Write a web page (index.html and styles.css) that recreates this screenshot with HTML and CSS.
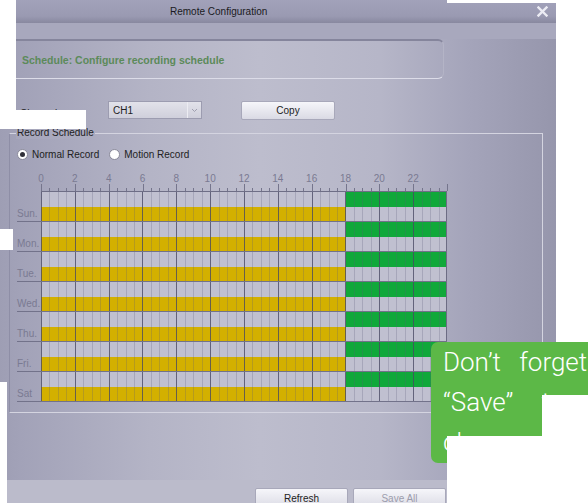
FILE: index.html
```html
<!DOCTYPE html>
<html lang="en">
<head>
  <meta charset="UTF-8">
  <meta name="viewport" content="width=device-width, initial-scale=1.0">
  <title>Remote Configuration</title>
  <link rel="stylesheet" href="styles.css">
</head>
<body>
  <div class="dialog">
    <div class="titlebar">
      <span class="title">Remote Configuration</span>
      <svg class="close" width="11" height="11" viewBox="0 0 11 11">
        <path d="M1.5 1.5 L9.5 9.5 M9.5 1.5 L1.5 9.5" stroke="#ececf4" stroke-width="2.4" stroke-linecap="square"/>
      </svg>
    </div>
    <div class="strip"></div>
    <div class="page-head">Schedule: Configure recording schedule</div>

    <div class="channel-row">
      <label class="field-label">Channel</label>
      <div class="select">
        <span>CH1</span>
        <span class="select-arrow">
          <svg width="7" height="5" viewBox="0 0 7 5"><path d="M1 1 L3.5 3.5 L6 1" fill="none" stroke="#a0a0b0" stroke-width="1"/></svg>
        </span>
      </div>
      <button class="btn copy">Copy</button>
    </div>

    <div class="group">
      <div class="legend">Record Schedule</div>
      <div class="radios">
        <label class="radio"><span class="dot checked"></span>Normal Record</label>
        <label class="radio"><span class="dot"></span>Motion Record</label>
      </div>
      <div class="ruler" id="ruler"></div>
      <div class="schedule" id="schedule"></div>
    </div>

    <div class="footer">
      <button class="btn">Refresh</button>
      <button class="btn disabled">Save All</button>
    </div>
  </div>

  <div class="tip">
    <p class="l1">Don’t forget</p>
    <p class="l2">“Save” to</p>
    <p>changes</p>
  </div>

  <!-- blank patches laid over the capture -->
  <div class="patch" style="left:0;top:0;width:16px;height:110px"></div>
  <div class="patch" style="left:0;top:110px;width:86px;height:19px"></div>
  <div class="patch" style="left:0;top:229px;width:13px;height:21px"></div>
  <div class="patch" style="left:0;top:382px;width:7px;height:121px"></div>
  <div class="patch" style="left:447px;top:0;width:141px;height:3px"></div>
  <div class="patch" style="left:542px;top:395px;width:46px;height:108px"></div>
  <div class="patch" style="left:447px;top:436px;width:141px;height:67px"></div>

  <script>
    const days = [
      { name: "Sun.", normal: [0, 18], motion: [18, 24] },
      { name: "Mon.", normal: [0, 18], motion: [18, 24] },
      { name: "Tue.", normal: [0, 18], motion: [18, 24] },
      { name: "Wed.", normal: [0, 18], motion: [18, 24] },
      { name: "Thu.", normal: [0, 18], motion: [18, 24] },
      { name: "Fri.", normal: [0, 18], motion: [18, 24] },
      { name: "Sat", normal: [0, 18], motion: [18, 24] },
    ];

    function pct(h) {
      return (h / 24 * 100).toFixed(4) + "%";
    }

    function bar(range, cls) {
      const left = pct(range[0]);
      const width = pct(range[1] - range[0]);
      return `<div class="bar ${cls}" style="left:${left};width:${width}"></div>`;
    }

    const ruler = document.getElementById("ruler");
    let html = "";
    for (let h = 0; h < 24; h += 2) {
      html += `<span class="hour" style="left:${pct(h)}">${h}</span>`;
    }
    for (let i = 0; i <= 48; i++) {
      const cls = i % 4 === 0 ? "tick major" : "tick";
      html += `<span class="${cls}" style="left:${pct(i / 2)}"></span>`;
    }
    ruler.innerHTML = html;

    const schedule = document.getElementById("schedule");
    days.forEach(day => {
      schedule.innerHTML += `<div class="day">
        <span class="day-name">${day.name}</span>
        <div class="tracks">
          <div class="track">${bar(day.motion, "motion")}</div>
          <div class="track">${bar(day.normal, "normal")}</div>
        </div>
      </div>`;
    });
  </script>
</body>
</html>
```

FILE: styles.css
```css
html {
  overflow: hidden;
}
body {
  margin: 0;
  width: 588px;
  height: 503px;
  overflow: hidden;
  position: relative;
  background-color: white;
  font-family: "Liberation Sans", Arial, sans-serif;
  font-size: 10px;
  color: #222;
}
.dialog {
  width: 556px;
  height: 503px;
  overflow: hidden;
  background: linear-gradient(to right, #9e9eb4 0, #a2a2b8 20px, #b4b4c6 150px, #bdbdcd 260px, #b6b6c8 380px, #a4a4ba 470px, #9696ac 556px);
}
.titlebar {
  height: 23px;
  box-sizing: border-box;
  display: flex;
  align-items: center;
  padding: 0 8px 0 170px;
  background: linear-gradient(to bottom, #a2a2ba 0, #9a9ab2 70%, #88889f 100%);
}
.title {
  flex: 1;
  font-size: 10px;
  color: #1a1a22;
}
.strip {
  height: 16px;
  background-color: #a8a8bd;
}
.page-head {
  margin-left: 16px;
  width: 421px;
  height: 37px;
  display: flex;
  align-items: center;
  padding-left: 6px;
  border-top: 2px solid #85859c;
  border-right: 1px solid #b4b4c6;
  border-bottom: 1px solid #dcdce8;
  border-radius: 0 6px 6px 0;
  font-size: 10.5px;
  font-weight: bold;
  color: #5c8a5a;
}
.channel-row {
  margin-top: 22px;
  height: 18px;
  display: flex;
  align-items: center;
}
.field-label {
  width: 88px;
  padding-left: 20px;
  color: #222;
  position: relative;
  top: 3px;
}
.select {
  width: 92px;
  height: 16px;
  display: flex;
  align-items: center;
  border: 1px solid #9c9cb0;
  background: linear-gradient(to bottom, #e2e2ea, #cfcfdb);
}
.select span:first-child {
  flex: 1;
  padding-left: 4px;
}
.select-arrow {
  width: 13px;
  height: 16px;
  display: flex;
  align-items: center;
  justify-content: center;
  border-left: 1px solid #ececf2;
}
.btn {
  width: 94px;
  height: 19px;
  padding: 0;
  border: 1px solid #a8a8ba;
  border-radius: 2px;
  background: linear-gradient(to bottom, #f6f6fa, #dadae4);
  font-family: "Liberation Sans", Arial, sans-serif;
  font-size: 10px;
  color: #222;
}
.copy {
  margin-left: 39px;
}
.btn.disabled {
  color: #9c9cac;
}

/* Record Schedule group: box from y 133 to 412 */
.group {
  margin: 14px 13px 0 9px;
  height: 278px;
  padding: 0 0 0 7px;
  border: 1px solid #d4d4e0;
  border-left-color: #8e8ea6;
}
.legend {
  margin: -7px 0 0 -1px;
  width: max-content;
  height: 12px;
  line-height: 12px;
  padding: 0 1px;
  color: #222;
  background: linear-gradient(to right, #a6a6bb, #acacc0);
}
.radios {
  margin-top: 9px;
  height: 12px;
  display: flex;
  align-items: center;
  gap: 10px;
}
.radio {
  display: flex;
  align-items: center;
  gap: 4px;
}
.dot {
  width: 9px;
  height: 9px;
  border: 1px solid #8a8a9a;
  border-radius: 50%;
  background-color: white;
  display: flex;
  align-items: center;
  justify-content: center;
}
.dot.checked::after {
  content: "";
  width: 5px;
  height: 5px;
  border-radius: 50%;
  background-color: #303038;
}
.ruler {
  position: relative;
  margin: 11px 0 0 24px;
  width: 406px;
  height: 20px;
  border-bottom: 1px solid #6e6e86;
}
.hour {
  position: absolute;
  top: 2px;
  transform: translateX(-50%);
  color: #7a7a92;
  font-size: 10px;
}
.tick {
  position: absolute;
  bottom: 0;
  width: 1px;
  height: 3px;
  background-color: #75758c;
}
.tick.major {
  height: 7px;
}
.day {
  height: 30px;
  box-sizing: border-box;
  display: flex;
  border-bottom: 1px solid #72728a;
  width: 430px;
}
.day-name {
  width: 24px;
  align-self: flex-end;
  line-height: 14px;
  color: #7a7a92;
  font-size: 10px;
}
.tracks {
  width: 406px;
  position: relative;
  background-color: #c0c0d0;
}
.tracks::after {
  content: "";
  position: absolute;
  inset: 0;
  border-right: 1px solid #6c6c84;
  background-image:
    repeating-linear-gradient(to right, rgba(70, 70, 96, 0.7) 0 1px, transparent 1px 33.8333px),
    repeating-linear-gradient(to right, rgba(90, 90, 120, 0.25) 0 1px, transparent 1px 8.4583px);
}
.track {
  height: 15px;
  position: relative;
}
.track + .track {
  height: 14px;
}
.bar {
  position: absolute;
  top: 0;
  bottom: 0;
}
.bar.normal {
  background-color: #d3b000;
}
.bar.motion {
  background-color: #10a83a;
}

/* bottom button bar, y 480 to 503 */
.footer {
  margin-top: 67px;
  height: 23px;
  box-sizing: border-box;
  display: flex;
  align-items: flex-start;
  gap: 5px;
  padding: 8px 0 0 255px;
  background-color: #bbbbcb;
  overflow: hidden;
}
.footer .btn {
  width: 93px;
  height: 21px;
  flex-shrink: 0;
}
.tip {
  position: absolute;
  left: 431px;
  top: 342px;
  width: 157px;
  height: 121px;
  overflow: hidden;
  box-sizing: border-box;
  padding: 0 0 0 12px;
  border-radius: 7px 0 0 7px;
  background-color: #5cb847;
  color: white;
  font-family: Roboto, "Noto Sans", sans-serif;
  font-weight: 300;
  font-size: 26px;
  line-height: 40px;
  white-space: nowrap;
}
.tip p {
  margin: 0;
}
.tip .l1 {
  word-spacing: 12px;
}
.tip .l2 {
  word-spacing: 22px;
}
.patch {
  position: absolute;
  background-color: white;
}
```
